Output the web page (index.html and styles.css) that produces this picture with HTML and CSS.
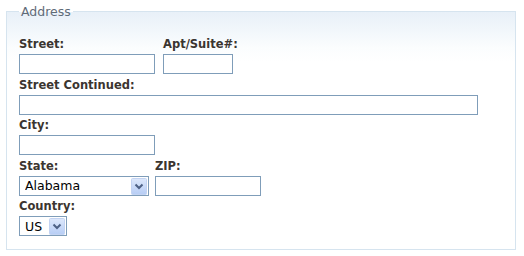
FILE: index.html
```html
<!DOCTYPE html>
<html lang="en">
<head>
    <meta charset="UTF-8">
    <title>Address</title>
    <link rel="stylesheet" href="styles.css">
</head>
<body>
<fieldset class="address">
    <legend>Address</legend>
    <div class="row">
        <div class="field">
            <label for="street">Street:</label>
            <input type="text" id="street" class="w136">
        </div>
        <div class="field">
            <label for="apt">Apt/Suite#:</label>
            <input type="text" id="apt" class="w70">
        </div>
    </div>
    <div class="field">
        <label for="street2">Street Continued:</label>
        <input type="text" id="street2" class="w459">
    </div>
    <div class="field">
        <label for="city">City:</label>
        <input type="text" id="city" class="w136">
    </div>
    <div class="row row-tight">
        <div class="field">
            <label for="state">State:</label>
            <span class="pick w130">
                <select id="state">
                    <option>Alabama</option>
                    <option>Alaska</option>
                    <option>Arizona</option>
                </select>
                <svg class="arrow" width="16" height="17" viewBox="0 0 16 17">
                    <defs>
                        <linearGradient id="g1" x1="0" y1="0" x2="0" y2="1">
                            <stop offset="0" stop-color="#dde8fb"/>
                            <stop offset="1" stop-color="#b7cdf5"/>
                        </linearGradient>
                    </defs>
                    <rect x="0.5" y="0.5" width="15" height="16" rx="1" fill="url(#g1)" stroke="#c3d3f2"/>
                    <path d="M4.5 6.5 L8 10 L11.5 6.5" fill="none" stroke="#4d6185" stroke-width="2"/>
                </svg>
            </span>
        </div>
        <div class="field">
            <label for="zip">ZIP:</label>
            <input type="text" id="zip" class="w106">
        </div>
    </div>
    <div class="field">
        <label for="country">Country:</label>
        <span class="pick w48">
            <select id="country">
                <option>US</option>
                <option>CA</option>
            </select>
            <svg class="arrow" width="16" height="17" viewBox="0 0 16 17">
                <defs>
                    <linearGradient id="g2" x1="0" y1="0" x2="0" y2="1">
                        <stop offset="0" stop-color="#dde8fb"/>
                        <stop offset="1" stop-color="#b7cdf5"/>
                    </linearGradient>
                </defs>
                <rect x="0.5" y="0.5" width="15" height="16" rx="1" fill="url(#g2)" stroke="#c3d3f2"/>
                <path d="M4.5 6.5 L8 10 L11.5 6.5" fill="none" stroke="#4d6185" stroke-width="2"/>
            </svg>
        </span>
    </div>
</fieldset>
</body>
</html>
```

FILE: styles.css
```css
html,body{
    width: 100%;
    height: 100%;
    overflow: hidden;
}
*{
    margin: 0;
    padding: 0;
    box-sizing: border-box;
}
body{
    background: #fff;
    font-family: "DejaVu Sans", Verdana, sans-serif;
    color: #3b3530;
}
.address{
    width: 510px;
    margin: 4px 0 0 6px;
    padding: 15px 12px 12px 12px;
    border: 1px solid #d6e4ef;
    background: linear-gradient(#e8f0f8 0, #fbfdfe 36px, #fff 50px);
}
.address legend{
    padding: 0 2px;
    font-size: 12.5px;
    line-height: 15px;
    color: #5f6b78;
}
.row{
    display: flex;
    gap: 8px;
}
.row-tight{
    gap: 6px;
}
.field label{
    display: block;
    height: 20px;
    padding-top: 2px;
    font-size: 11.5px;
    font-weight: bold;
    line-height: 16px;
}
.field input{
    display: block;
    height: 20px;
    border: 1px solid #7f9db9;
    background: #fff;
    outline: none;
    font-family: inherit;
    font-size: 12.5px;
}
.field{
    margin-bottom: 0.5px;
}
.w136{ width: 136px; }
.w70{ width: 70px; }
.w459{ width: 459px; }
.w106{ width: 106px; }
.w130{ width: 130px; }
.w48{ width: 48px; }
.pick{
    display: block;
    position: relative;
    height: 20px;
}
.pick select{
    -webkit-appearance: none;
    appearance: none;
    display: block;
    width: 100%;
    height: 20px;
    border: 1px solid #7f9db9;
    border-radius: 0;
    background: #fff;
    padding: 0 0 0 5px;
    font-family: "DejaVu Sans", Verdana, sans-serif;
    font-size: 12.5px;
    color: #000;
    outline: none;
}
.pick .arrow{
    position: absolute;
    right: 2px;
    top: 2px;
    pointer-events: none;
}
```
